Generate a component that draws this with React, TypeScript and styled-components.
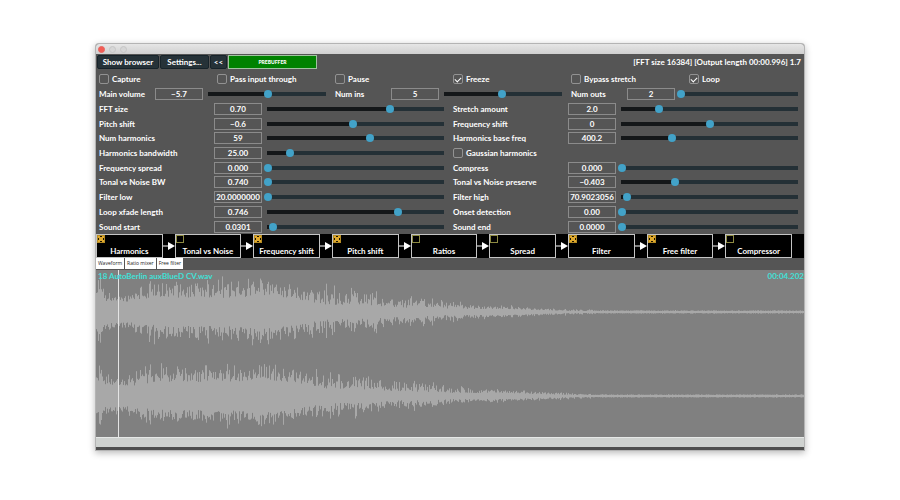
import React, { useState } from "react";
import styled, { createGlobalStyle } from "styled-components";

const GlobalStyle = createGlobalStyle`
  * { box-sizing: border-box; }
  body { margin: 0; background: #fff; }
  body, button, input { font-family: Lato, "Noto Sans", sans-serif; font-size: 8px; font-weight: 700; line-height: 12px; }
`;

const Page = styled.main`
  padding: 44px 96px;
`;

const Window = styled.section`
  background: #555;
  color: #fff;
  border-bottom: 3px solid #4f4f4f;
  border-radius: 3px 3px 0 0;
  box-shadow: 0 0 0 1px #b4b4b4, 0 2px 7px 1px rgba(0, 0, 0, 0.28);
`;

const TitleBar = styled.header`
  display: flex;
  align-items: center;
  gap: 4px;
  height: 10px;
  padding: 0 2px;
  border-radius: 3px 3px 0 0;
  background: linear-gradient(#e6e6e6, #d0d0d0);
`;

const WindowButton = styled.button<{ $color: string; $edge: string }>`
  width: 7px;
  height: 7px;
  padding: 0;
  border: 1px solid ${(p) => p.$edge};
  border-radius: 50%;
  background: ${(p) => p.$color};
`;

const Toolbar = styled.div`
  display: flex;
  align-items: stretch;
  gap: 1px;
  height: 18px;
  padding: 1px 1px 3px;
`;

const ToolButton = styled.button<{ $width: number }>`
  width: ${(p) => p.$width}px;
  padding: 0;
  border: 1px solid #17232a;
  border-radius: 2px;
  background: #263238;
  color: #fff;
`;

const BufferStatus = styled.div`
  display: flex;
  align-items: center;
  justify-content: center;
  width: 89px;
  border: 1px solid #9fc49f;
  background: #008200;
  font-size: 5px;
  font-weight: 900;
`;

const Status = styled.p`
  margin: 0 2px 0 auto;
  line-height: 15px;
`;

const Parameters = styled.div`
  display: grid;
  grid-template-rows: repeat(11, 1fr);
  height: 162px;
`;

const ParameterRow = styled.div<{ $columns: number }>`
  display: grid;
  grid-template-columns: repeat(${(p) => p.$columns}, minmax(0, 1fr));
  align-items: center;
`;

const CheckLabel = styled.label`
  display: flex;
  align-items: center;
  gap: 3px;
  padding-left: 3px;
`;

const CheckBox = styled.input`
  appearance: none;
  display: grid;
  place-items: center;
  width: 10px;
  height: 10px;
  margin: 0;
  border: 1px solid #929292;
  border-radius: 2px;

  &:checked::after {
    content: "";
    width: 5px;
    height: 3px;
    border-left: 1px solid #fff;
    border-bottom: 1px solid #fff;
    transform: rotate(-45deg);
  }
`;

const Field = styled.div`
  display: flex;
  align-items: center;
  min-width: 0;
`;

const FieldLabel = styled.label<{ $parts: number }>`
  flex: 0 0 calc(100% / ${(p) => p.$parts});
  padding-left: 3px;
  white-space: nowrap;
`;

const NumberBox = styled.input`
  flex: none;
  width: 48px;
  height: 12px;
  padding: 0;
  border: 1px solid #8b8b8b;
  background: transparent;
  color: #fff;
  text-align: center;
  line-height: 10px;
`;

const Slider = styled.input.attrs({ type: "range", min: 0, max: 1000 })`
  appearance: none;
  flex: 1;
  min-width: 0;
  height: 8px;
  margin: 0 3px 0 2px;
  background: linear-gradient(90deg, #141719 var(--level), #243036 var(--level)) center / calc(100% - 6px) 4px no-repeat;

  &::-webkit-slider-thumb {
    appearance: none;
    width: 8px;
    height: 8px;
    border-radius: 50%;
    background: #42a2c8;
  }
`;

const Chain = styled.div`
  display: grid;
  grid-template-columns: repeat(9, minmax(0, 1fr));
  height: 24px;
  background: #000;
`;

const Stage = styled.div`
  display: flex;
  align-items: center;
`;

const Module = styled.label`
  position: relative;
  flex: 1;
  height: 24px;
  padding-top: 10px;
  border: 1px solid #c4c4c4;
  text-align: center;
  white-space: nowrap;
`;

const ModuleToggle = styled.input.attrs({ type: "checkbox" })`
  appearance: none;
  position: absolute;
  top: 0;
  left: 0;
  width: 8px;
  height: 8px;
  margin: 0;
  border: 1px solid #8d8a42;

  &:checked {
    border-color: #b58c24;
    background:
      linear-gradient(45deg, transparent 42%, #e0a92c 42% 58%, transparent 58%),
      linear-gradient(-45deg, transparent 42%, #e0a92c 42% 58%, transparent 58%),
      #1c1400;
    background-origin: border-box;
  }
`;

const ArrowIcon = styled.svg`
  display: block;
  flex: none;
  width: 12px;
  height: 8px;
`;

const ArrowSpace = styled.span`
  flex: none;
  width: 12px;
`;

const Tabs = styled.div`
  display: flex;
  gap: 1px;
  height: 12px;
`;

const Tab = styled.button`
  height: 11px;
  padding: 0 2px;
  border: 0;
  background: #fff;
  color: #222;
  font-family: "Open Sans", "Noto Sans", sans-serif;
  font-size: 5px;
  font-weight: 400;
  line-height: 11px;
`;

const Display = styled.div`
  position: relative;
  height: 167px;
  overflow: hidden;
  background: #808080;
`;

const WaveDrawing = styled.svg`
  display: block;
  width: 100%;
  height: 100%;
`;

const Caption = styled.div`
  position: absolute;
  inset: 0 0 auto;
  display: flex;
  justify-content: space-between;
  padding-left: 2px;
  color: #40e0d8;
`;

const Scrollbar = styled.div`
  height: 10px;
  border-top: 1px solid #e6e8e7;
  background: #cfd2d0;
`;

type Param = { label: string; value: string; level: number };
type Check = { label: string; on: boolean };

const options: Check[] = [
  { label: "Capture", on: false },
  { label: "Pass input through", on: false },
  { label: "Pause", on: false },
  { label: "Freeze", on: true },
  { label: "Bypass stretch", on: false },
  { label: "Loop", on: true },
];

const mixer: Param[] = [
  { label: "Main volume", value: "−5.7", level: 505 },
  { label: "Num ins", value: "5", level: 495 },
  { label: "Num outs", value: "2", level: 0 },
];

const rows: [Param, Param | Check][] = [
  [{ label: "FFT size", value: "0.70", level: 697 }, { label: "Stretch amount", value: "2.0", level: 210 }],
  [{ label: "Pitch shift", value: "−0.6", level: 485 }, { label: "Frequency shift", value: "0", level: 500 }],
  [{ label: "Num harmonics", value: "59", level: 582 }, { label: "Harmonics base freq", value: "400.2", level: 285 }],
  [{ label: "Harmonics bandwidth", value: "25.00", level: 125 }, { label: "Gaussian harmonics", on: false }],
  [{ label: "Frequency spread", value: "0.000", level: 0 }, { label: "Compress", value: "0.000", level: 0 }],
  [{ label: "Tonal vs Noise BW", value: "0.740", level: 0 }, { label: "Tonal vs Noise preserve", value: "−0.403", level: 300 }],
  [{ label: "Filter low", value: "20.0000000", level: 0 }, { label: "Filter high", value: "70.9023056", level: 27 }],
  [{ label: "Loop xfade length", value: "0.746", level: 742 }, { label: "Onset detection", value: "0.00", level: 0 }],
  [{ label: "Sound start", value: "0.0301", level: 30 }, { label: "Sound end", value: "0.0000", level: 0 }],
];

const modules: Check[] = [
  { label: "Harmonics", on: true },
  { label: "Tonal vs Noise", on: false },
  { label: "Frequency shift", on: true },
  { label: "Pitch shift", on: true },
  { label: "Ratios", on: false },
  { label: "Spread", on: false },
  { label: "Filter", on: true },
  { label: "Free filter", on: true },
  { label: "Compressor", on: false },
];

const tabs = ["Waveform", "Ratio mixer", "Free filter"];

// Envelope points: position, solid body height, peak height.
const envelope = [
  [0, 16, 32], [4, 15, 48], [8, 11, 28], [22, 11, 20], [36, 10, 22], [48, 12, 36], [70, 14, 38],
  [110, 14, 38], [140, 14, 38], [165, 17, 40], [190, 14, 36], [215, 10, 30],
  [232, 7, 30], [255, 7, 30], [278, 6, 30], [292, 5, 18], [310, 4, 19], [330, 4, 17],
  [350, 3, 14], [375, 3, 9], [410, 3, 8], [435, 2, 6], [475, 1, 4], [510, 1, 2],
  [600, 1, 2], [708, 1, 2],
];

function bounds(x: number) {
  const i = Math.max(1, envelope.findIndex((p) => p[0] >= x));
  const [a, b] = [envelope[i - 1], envelope[i]];
  const t = (x - a[0]) / (b[0] - a[0]);
  return [a[1] + (b[1] - a[1]) * t, a[2] + (b[2] - a[2]) * t];
}

function wavePath(center: number, seed: number) {
  let state = seed;
  const random = () => {
    state = (state * 1664525 + 1013904223) % 4294967296;
    return state / 4294967296;
  };
  let path = "";
  for (let x = 0; x < 708; x += 1) {
    const [body, peak] = bounds(x);
    const swell = random() ** 2;
    const up = body + (peak - body) * (swell * 0.6 + random() ** 3 * 0.4);
    const down = body + (peak - body) * (swell * 0.5 + random() ** 3 * 0.4);
    path += `M${x + 0.5} ${(center - up).toFixed(1)}V${(center + down).toFixed(1)}`;
  }
  return path;
}

const channels = [wavePath(42, 71), wavePath(126, 389)];

function CheckField({ item }: { item: Check }) {
  return (
    <CheckLabel>
      <CheckBox type="checkbox" defaultChecked={item.on} />
      {item.label}
    </CheckLabel>
  );
}

function ParamField({ item, parts }: { item: Param; parts: number }) {
  const [level, setLevel] = useState(item.level);
  const id = item.label.toLowerCase().replace(/ /g, "-");
  return (
    <Field>
      <FieldLabel htmlFor={id} $parts={parts}>{item.label}</FieldLabel>
      <NumberBox id={id} type="text" defaultValue={item.value} />
      <Slider
        aria-label={item.label}
        value={level}
        onChange={(e) => setLevel(Number(e.target.value))}
        style={{ "--level": `${level / 10}%` } as React.CSSProperties}
      />
    </Field>
  );
}

function Arrow() {
  return (
    <ArrowIcon viewBox="0 0 12 8" aria-hidden="true">
      <path d="M0 4H6" stroke="#fff" />
      <path d="M5 0L12 4L5 8Z" fill="#fff" />
    </ArrowIcon>
  );
}

export default function App() {
  return (
    <>
      <GlobalStyle />
      <Page>
        <Window>
          <TitleBar>
            <WindowButton aria-label="Close" $color="#f35c54" $edge="#e5655f" />
            <WindowButton aria-label="Minimize" $color="#d6d6d6" $edge="#c6c6c6" />
            <WindowButton aria-label="Zoom" $color="#d6d6d6" $edge="#c6c6c6" />
          </TitleBar>
          <Toolbar>
            <ToolButton $width={62}>Show browser</ToolButton>
            <ToolButton $width={49}>Settings...</ToolButton>
            <ToolButton $width={17}>&lt;&lt;</ToolButton>
            <BufferStatus>PREBUFFER</BufferStatus>
            <Status>[FFT size 16384] [Output length 00:00.996] 1.7</Status>
          </Toolbar>
          <Parameters>
            <ParameterRow $columns={6}>
              {options.map((o) => <CheckField key={o.label} item={o} />)}
            </ParameterRow>
            <ParameterRow $columns={3}>
              {mixer.map((m) => <ParamField key={m.label} item={m} parts={4} />)}
            </ParameterRow>
            {rows.map(([left, right]) => (
              <ParameterRow key={left.label} $columns={2}>
                <ParamField item={left} parts={3} />
                {"on" in right ? <CheckField item={right} /> : <ParamField item={right} parts={3} />}
              </ParameterRow>
            ))}
          </Parameters>
          <Chain>
            {modules.map((m, i) => (
              <Stage key={m.label}>
                <Module>
                  <ModuleToggle defaultChecked={m.on} />
                  {m.label}
                </Module>
                {i < modules.length - 1 ? <Arrow /> : <ArrowSpace />}
              </Stage>
            ))}
          </Chain>
          <Tabs>
            {tabs.map((t) => <Tab key={t}>{t}</Tab>)}
          </Tabs>
          <Display>
            <WaveDrawing viewBox="0 0 708 167" preserveAspectRatio="none" aria-hidden="true">
              {channels.map((d) => <path key={d} d={d} stroke="#a8a8a8" fill="none" />)}
              <path d="M22.5 0V167" stroke="#e4e4e4" />
            </WaveDrawing>
            <Caption>
              <span>18 AutoBerlin auxBlueD CV.wav</span>
              <span>00:04.202</span>
            </Caption>
          </Display>
          <Scrollbar />
        </Window>
      </Page>
    </>
  );
}
